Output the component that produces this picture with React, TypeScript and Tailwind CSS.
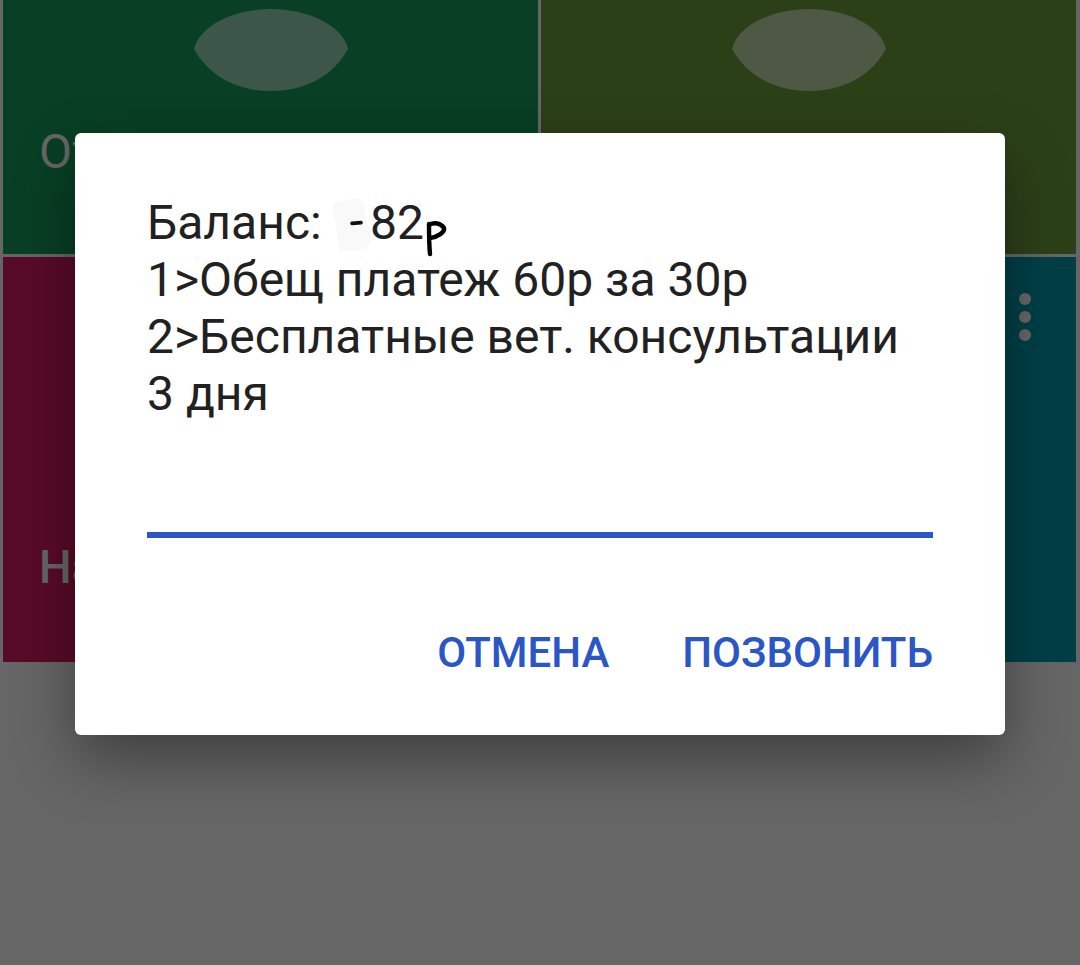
const roboto = { fontFamily: "Roboto, 'Noto Sans', sans-serif" };

function Eye() {
  return (
    <svg className="block h-[84px] w-[156px]" viewBox="0 0 156 84" aria-hidden="true">
      <path d="M1 41C6 18 40 1 78 1C116 1 150 18 155 41C140 68 112 83 78 83C44 83 16 68 1 41Z" fill="#707070" fillOpacity="0.5" />
    </svg>
  );
}

function Dots() {
  return (
    <div className="flex flex-col gap-[6px] pr-[45px] pt-[36px]">
      <span className="h-[12px] w-[12px] rounded-full bg-[#666]" />
      <span className="h-[12px] w-[12px] rounded-full bg-[#666]" />
      <span className="h-[12px] w-[12px] rounded-full bg-[#666]" />
    </div>
  );
}

export default function App() {
  return (
    <div className="relative h-[965px] w-[1080px] overflow-hidden bg-[#666]" style={roboto}>
      <div className="grid grid-cols-[535px_535px] grid-rows-[254px_405px] gap-[3px] pl-[3px]">
        <div className="flex flex-col items-center bg-[#083f25] pt-[8px]">
          <Eye />
          <p className="mt-[32px] self-start pl-[36px] text-[48px] leading-[56px] text-[#666]">От</p>
        </div>
        <div className="flex flex-col items-center bg-[#2c4018] pt-[8px]">
          <Eye />
        </div>
        <div className="bg-[#580b27] pl-[36px] pt-[282px]">
          <p className="text-[46px] font-medium leading-[56px] text-[#666]">На</p>
        </div>
        <div className="flex justify-end bg-[#003f47]">
          <Dots />
        </div>
      </div>

      <div className="absolute left-[75px] top-[133px] flex h-[602px] w-[930px] flex-col rounded-[6px] bg-white px-[72px] pt-[61px] shadow-[0_24px_60px_rgba(0,0,0,0.38)]">
        <div className="text-[48px] leading-[57px] text-[#212121]">
          <p className="relative">
            Баланс:
            <svg className="absolute left-[185px] top-[3px] h-[56px] w-[40px]" viewBox="0 0 40 56" aria-hidden="true">
              <path d="M2 7C8 2 14 4 20 2C26 0 30 3 32 8C33 18 34 26 38 32C40 40 38 50 32 52C24 55 16 52 8 54C4 44 5 30 3 22C2 16 0 12 2 7Z" fill="#f9f9f9" />
            </svg>
            <svg className="absolute left-[203px] top-[26px] h-[6px] w-[13px]" viewBox="0 0 13 6" aria-hidden="true">
              <path d="M2 3.4L11 2.6" stroke="#111" strokeWidth="3.6" strokeLinecap="round" />
            </svg>
            <span className="absolute left-[223px] top-0">82</span>
            <svg className="absolute left-[277px] top-[26px] h-[38px] w-[24px]" viewBox="0 0 24 38" aria-hidden="true">
              <path d="M5 4C5 14 5 24 6 34M5 5C10 2 17 3 20 8C21 12 14 17 6 18" fill="none" stroke="#000" strokeWidth="4.4" strokeLinecap="round" strokeLinejoin="round" />
            </svg>
          </p>
          <p>1&gt;Обещ платеж 60р за 30р</p>
          <p>2&gt;Бесплатные вет. консультации</p>
          <p>3 дня</p>
        </div>
        <div className="mt-[110px] h-[6px] w-full bg-[#2a56c6]" />
        <div className="mt-[93px] flex justify-end gap-[73px] text-[42px] font-medium leading-[44px] text-[#2a56c6]">
          <button type="button">ОТМЕНА</button>
          <button type="button">ПОЗВОНИТЬ</button>
        </div>
      </div>
    </div>
  );
}
